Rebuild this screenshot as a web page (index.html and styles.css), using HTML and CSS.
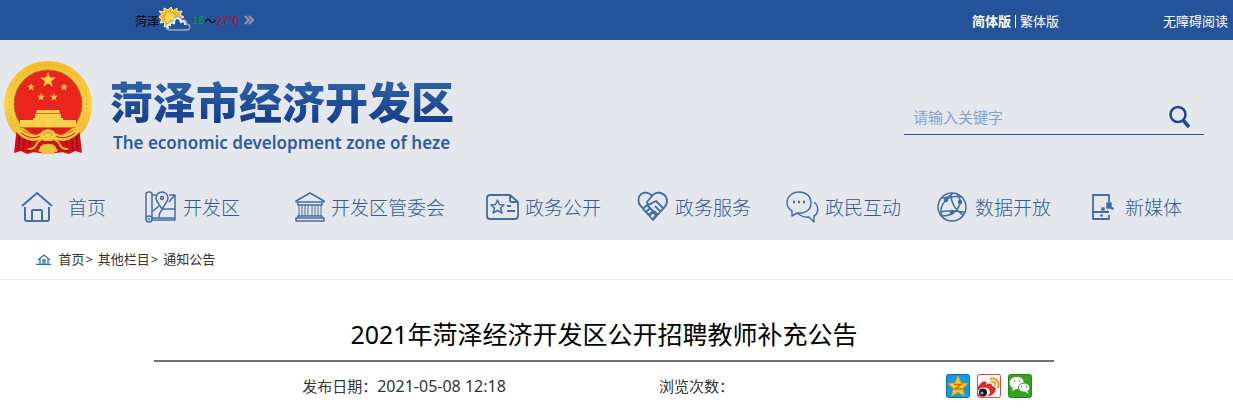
FILE: index.html
```html
<!DOCTYPE html>
<html lang="zh-CN">
<head>
  <meta charset="UTF-8" />
  <meta name="viewport" content="width=device-width, initial-scale=1.0"/>
  <title>2021年菏泽经济开发区公开招聘教师补充公告</title>
  <link rel="stylesheet" href="styles.css">
</head>
<body>

<div class="topbar">
  <div class="weather">
    <span>菏泽</span>
    <svg class="weather-icon" width="32" height="26" viewBox="0 0 32 26">
      <path d="M12 0l2 4 4-3v4l5-1-2 4 4 2-4 2 3 4-5-1-1 5-4-3-3 6-2-5-4 2 1-5-5 1 2-4-4-2 4-2-3-4 5 1 0-4 4 2z" fill="#f9b52a" stroke="#fff0c0" stroke-width="1"/>
      <circle cx="11" cy="11" r="6" fill="#ffdc4c" stroke="#ef9412"/>
      <path d="M11 23c-5 0-5-6-1-6 0-3 3-4 5-2-1-7 7-7 8-1 3-2 5 0 4 3 5 0 5 6 0 6z" fill="#24549b" stroke="#a3a8b0" stroke-width="1.500"/>
      <path d="M10 21c-3-1-2-4 1-3 0-3 3-3 4-1 0-7 5-8 7-2 3-2 4 0 4 3" fill="none" stroke="#e6eef8" stroke-width="2"/>
    </svg>
    <span class="low">18</span><span>～</span><span class="high">27℃</span>
    <svg class="more" width="10" height="10" viewBox="0 0 10 10" fill="none" stroke="#9b9b9b" stroke-width="2"><path d="M1 1l4 4-4 4M5 1l4 4-4 4"/></svg>
  </div>
  <div class="top-links">
    <span class="lang"><a href="#"><b>简体版</b></a><i></i><a href="#">繁体版</a></span>
    <a href="#">无障碍阅读</a>
  </div>
</div>

<header>
  <div class="banner">
    <a class="logo" href="#">
      <svg width="88" height="96" viewBox="0 0 88 96">
        <defs>
          <linearGradient id="gold" x1="0" y1="0" x2="0" y2="1">
            <stop offset="0" stop-color="#f2bd2c"/><stop offset=".5" stop-color="#fbd346"/><stop offset="1" stop-color="#e6a920"/>
          </linearGradient>
          <path id="star" d="M0-8l2 5.400 5.800.2-4.600 3.600 1.600 5.600L0 3.600l-4.800 3.200 1.600-5.600-4.600-3.600 5.800-.2z"/>
        </defs>
        <ellipse cx="44" cy="45" rx="44" ry="44" fill="url(#gold)"/>
        <ellipse cx="44" cy="44" rx="39" ry="39" fill="none" stroke="#e3a624" stroke-width="1.500" stroke-dasharray="1 3"/>
        <path d="M13 66l-3 27 7-2 6 3 7-2 7-10zM75 66l3 27-7-2-6 3-7-2-7-10z" fill="#d5121b"/>
        <path d="M16 72l-2 18M21 76l-2 15M26 79l-1 13M72 72l2 18M67 76l2 15M62 79l1 13" stroke="#8e0d13" stroke-width="1.500"/>
        <circle cx="44" cy="44" r="34" fill="#e9251e" stroke="#a8752b"/>
        <g fill="#f8cf4a">
          <use href="#star" x="44" y="20"/>
          <use href="#star" transform="translate(27 27) scale(.5)"/>
          <use href="#star" transform="translate(60 27) scale(.5)"/>
          <use href="#star" transform="translate(37 37) scale(.5)"/>
          <use href="#star" transform="translate(50 37) scale(.5)"/>
          <path d="M33 50h22l1 3H32zM31 54h26v4H31zM29 58h30v2H29zM16 60h56v7H16z"/>
        </g>
        <path d="M32 53.500h24M16 67.500h56" stroke="#d57b18"/>
        <path d="M22 68h44l-12 8H34z" fill="#df1c1c"/>
        <path d="M11 66c9 12 19 15 28 9M77 66c-9 12-19 15-28 9" fill="none" stroke="#f3c53d" stroke-width="6"/>
        <path d="M17 73c8 6 16 6 22 1M71 73c-8 6-16 6-22 1" fill="none" stroke="#bd201a" stroke-width="1"/>
        <path d="M24 84c10 6 9-5 20-5s10 11 20 5l-4 8-16 2-16-2z" fill="#c91419"/>
        <path d="M36 80c-6 5-3 9-12 9M52 80c6 5 3 9 12 9" fill="none" stroke="#eeb631" stroke-width="2"/>
        <path d="M37 86c3-3 11-3 14 0l3 5-6 3h-8l-6-3z" fill="#f2c33a"/>
        <path d="M36 76l2-5 3-1 3-1 3 1 3 1 2 5-4 5h-8z" fill="#f5cb43"/>
        <path d="M40 76a4 4 0 0 1 8 0" fill="none" stroke="#d89a20"/>
      </svg>
      <span class="logo-text">
        <span class="logo-cn">菏泽市经济开发区</span>
        <span class="logo-en">The economic development zone of heze</span>
      </span>
    </a>
    <form class="search">
      <input type="text" placeholder="请输入关键字" aria-label="请输入关键字">
      <button type="button" aria-label="搜索">
        <svg width="22" height="24" viewBox="0 0 22 24" fill="none" stroke="#194892"><circle cx="9" cy="9.500" r="7.500" stroke-width="2.500"/><path d="M14 15l6 7" stroke-width="3.500"/></svg>
      </button>
    </form>
  </div>

  <nav>
    <a class="home" href="#">
      <svg viewBox="0 0 32 32"><path d="M1 15L16 2l15 13M4 16v12q0 2 2 2h20q2 0 2-2V16M11 30V20q0-1 1-1h8q1 0 1 1v10" stroke-width="2"/></svg>
      首页</a>
    <a href="#">
      <svg viewBox="0 0 32 32"><path d="M1 28V3q0-2 3-2t3 2v25M1 28q0 3 3 3t3-3-3-3-3 3M3 28h2M7 4h4M24 4h6v23H7M7 29h23v-2M17 18C14 13 11 10 11 7a6 6 0 0 1 12 0c0 3-3 6-6 11zM24 11l5-6M8 20l6-5M18 18h12M18 18q-4 3-4 9"/><circle cx="17" cy="7" r="1.500"/></svg>
      开发区</a>
    <a href="#">
      <svg viewBox="0 0 32 32"><path d="M3 10l14-8 14 8v1H3zM5 12v2h24v-2M3 30v-3h28v3zM5 27v-2h24v2" /><path d="M6 14v11M9 14v11M12 14v11M15 14v11M19 14v11M22 14v11M25 14v11M28 14v11" stroke-width="1"/></svg>
      开发区管委会</a>
    <a href="#">
      <svg viewBox="0 0 32 32"><path d="M23 4H3Q0 4 0 7v18q0 3 3 3h25q3 0 3-3V11zM23 4v5q0 2 2 2h6M20 15h4M20 20h8" stroke-width="1.800"/><path d="M10.500 9l2 4.500 4.500.5-3.500 3 1.500 5-4.500-2.500L6 22l1.500-5L4 14l4.500-.5z"/></svg>
      政务公开</a>
    <a href="#">
      <svg viewBox="0 0 32 32"><path d="M15 5C11 0 4 1 2 6c-2 5 1 9 5 12M15 5c4-5 11-4 14 1 3 6-1 10-5 14l-8 9-9-10M15 5l-5 6c0 3 3 3 5 1l4-2 8 8M6 18l4-4 3 3-4 4zM9 21l4-4 3 3-4 4zM12 25l4-4 3 3-3 4M18 15l6 6M17 20l4 4" stroke-width="1.800"/></svg>
      政务服务</a>
    <a href="#">
      <svg viewBox="0 0 32 32"><path d="M5 20v5l5-3c8 1 14-3 14-10S19 1 12 1 0 6 0 12c0 4 2 6 5 8zM27 11c5 4 5 11 0 14v6l-5-5c-5 1-8-1-11-3"/><path d="M6 11h2M11 11h2M16 11h2" stroke-width="2.500"/></svg>
      政民互动</a>
    <a href="#">
      <svg viewBox="0 0 32 32"><circle cx="15" cy="16" r="14"/><path d="M5 7c3 0 8-1 11-5M14 3c0 9 4 16 12 21M20 3c4 5 4 10 1 14-3 5-8 8-16 8M9 9C4 14 3 20 5 25M3 21c8-2 16-1 25 0M9 9c5-4 10-4 15-3"/><circle cx="9" cy="9" r="1.500" fill="#446da3"/><circle cx="23" cy="11" r="1.500" fill="#446da3"/><circle cx="15" cy="21" r="1.500" fill="#446da3"/></svg>
      数据开放</a>
    <a href="#">
      <svg viewBox="0 0 32 32"><path d="M22 11V4H6v24h16v-4M6 21h16" stroke-width="1.800"/><path d="M20 12h4v5h-4zM15 17h2v2h-2zM25 17h1v1h-1zM20 20h1M14 24h1v1h-1z" fill="#446da3"/></svg>
      新媒体</a>
  </nav>
</header>

<div class="crumbs">
  <svg width="16" height="12" viewBox="0 0 16 12" fill="none" stroke="#1f75c4" stroke-width="1.300"><path d="M2 7l6-5 6 5M4 6v5M12 6v5M7 11V7h2v4M0 11.500h15"/></svg>
  <a href="#">首页</a><span>&gt;</span><a href="#">其他栏目</a><span>&gt;</span><a href="#">通知公告</a>
</div>

<main>
  <article>
    <h1>2021年菏泽经济开发区公开招聘教师补充公告</h1>
    <div class="meta">
      <div class="date">发布日期：<time>2021-05-08 12:18</time></div>
      <div class="views">浏览次数：</div>
      <div class="share">
        <a href="#" aria-label="QQ空间">
          <svg width="24" height="24" viewBox="0 0 24 24"><rect x=".5" y=".5" width="23" height="23" rx="2" fill="#139be5" stroke="#0b6db5"/><path d="M12 2l3 7 7 .5-5.500 5 2 7.500-6.500-4-6.500 4 2-7.500L2 9.500 9 9z" fill="#ffc928" stroke="#ed9e0c"/><path d="M8 10.500h7l-6 4.500h7" fill="none" stroke="#cc6d0a" stroke-width="1.500"/></svg>
        </a>
        <a href="#" aria-label="新浪微博">
          <svg width="24" height="24" viewBox="0 0 24 24"><rect x=".5" y=".5" width="23" height="23" rx="2" fill="#fff8f6" stroke="#d94b48"/><path d="M1 13c2-4 6-7 8-5 1 1 0 2 0 3 3-2 6-2 6 1 4 1 5 4 2 7-3 4-9 4-16 3z" fill="#e32731"/><ellipse cx="7" cy="18" rx="6" ry="4.500" fill="#fff"/><circle cx="6" cy="18.500" r="4" fill="#161616"/><circle cx="5" cy="19" r="1.500" fill="#9ab0bd"/><path d="M13 5c6-2 10 3 8 9M14 8c3-1 5 1 4 4" fill="none" stroke="#f5981e" stroke-width="2"/></svg>
        </a>
        <a href="#" aria-label="微信">
          <svg width="24" height="24" viewBox="0 0 24 24"><rect x=".5" y=".5" width="23" height="23" rx="2" fill="#35a51e" stroke="#27821a"/><path d="M9 3c-9 0-9 9-4 11l-1 3 4-2c9 1 11-12 1-12z" fill="#fff"/><path d="M16 9c-8 0-7 10 1 9l4 3-1-4c4-3 1-8-4-8z" fill="#fff" stroke="#35a51e"/><path d="M6 7h1M11 7h1M13 12.500h1M18 12.500h1" stroke="#237d17" stroke-width="1.500"/></svg>
        </a>
      </div>
    </div>
  </article>
</main>

</body>
</html>
```
FILE: styles.css
```css
* { box-sizing: border-box; }

body {
  margin: 0;
  font-family: "Noto Sans", "Noto Sans CJK SC", sans-serif;
  font-size: 13px;
  color: #333;
  background: #fff;
}

a {
  color: inherit;
  text-decoration: none;
}

.topbar {
  display: flex;
  justify-content: space-between;
  align-items: center;
  height: 40px;
  padding: 0 5px 0 135px;
  background: #24539a;
  color: #fff;
}

.weather {
  display: flex;
  align-items: center;
  font-family: "Liberation Sans", "Noto Sans CJK SC", sans-serif;
  font-size: 12px;
  color: #000;
}

.weather-icon {
  margin-right: 1px;
}

.low { color: #00a13a; }
.high { color: #d9000f; }

.low,
.high {
  font-size: 11px;
}

.more {
  margin-left: 4px;
}

.top-links {
  display: flex;
  gap: 104px;
  line-height: 20px;
  padding-top: 2px;
}

.lang {
  display: flex;
  align-items: center;
}

.lang i {
  width: 1px;
  height: 13px;
  margin: 0 4px;
  background: #fff;
}

header {
  background: #e4e7ec;
}

.banner {
  display: flex;
  justify-content: space-between;
  align-items: flex-start;
  padding: 20px 29px 19px 4px;
}

.logo {
  display: flex;
  gap: 18px;
}

.logo svg {
  flex: none;
}

.logo-text {
  display: flex;
  flex-direction: column;
  padding-top: 10px;
}

.logo-cn {
  font-size: 43px;
  line-height: 60px;
  font-weight: 900;
  font-family: "Noto Sans CJK SC", sans-serif;
  background: linear-gradient(#2c62a5 20%, #173f8b 85%);
  -webkit-background-clip: text;
  background-clip: text;
  color: transparent;
}

.logo-en {
  padding-left: 3px;
  font-size: 17px;
  line-height: 26px;
  font-weight: 600;
  color: #2f5c9f;
}

.search {
  display: flex;
  align-items: center;
  width: 300px;
  margin-top: 40px;
  border-bottom: 1px solid #24539a;
}

.search input {
  flex: 1;
  min-width: 0;
  height: 34px;
  padding: 0 9px;
  border: none;
  outline: none;
  background: transparent;
  font-family: inherit;
  font-size: 15px;
  color: #24539a;
}

.search input::placeholder {
  color: #86a3cf;
}

.search button {
  display: flex;
  margin-right: 13px;
  padding: 0;
  border: none;
  background: transparent;
  cursor: pointer;
}

nav {
  display: grid;
  grid-template-columns: 124fr 148fr 194fr 150fr 150fr 150fr 150fr 146fr;
  padding-left: 21px;
  height: 65px;
}

nav a {
  display: flex;
  align-items: center;
  gap: 6px;
  height: 64px;
  font-size: 19px;
  font-weight: 300;
  color: #315c98;
  white-space: nowrap;
}

nav svg {
  flex: none;
  width: 32px;
  height: 32px;
  fill: none;
  stroke: #446da3;
  stroke-width: 1.5;
  stroke-linejoin: round;
  overflow: visible;
}

nav .home {
  gap: 15px;
}

.crumbs {
  height: 40px;
  padding-left: 36px;
  line-height: 39px;
  border-bottom: 1px solid #e8e8e8;
}

.crumbs svg {
  margin-right: 3px;
  vertical-align: -1px;
}

.crumbs span {
  margin: 0 5px 0 1px;
}

main {
  padding: 36px 25px 0 0;
}

article {
  max-width: 900px;
  margin: 0 auto;
}

h1 {
  margin: 0;
  padding-bottom: 8px;
  border-bottom: 2px solid #707070;
  text-align: center;
  font-size: 25px;
  line-height: 36px;
  font-weight: 400;
  color: #000;
}

.meta {
  display: grid;
  grid-template-columns: 5fr 3fr 1fr;
  align-items: center;
  padding-top: 10px;
  font-size: 15px;
  line-height: 28px;
}

.date {
  padding-left: 5px;
  text-align: center;
}

.date time {
  font-size: 16px;
}

.views {
  padding-left: 10px;
}

.share {
  display: flex;
  justify-content: flex-end;
  gap: 7px;
  padding-right: 22px;
}

.share svg {
  display: block;
}
```
